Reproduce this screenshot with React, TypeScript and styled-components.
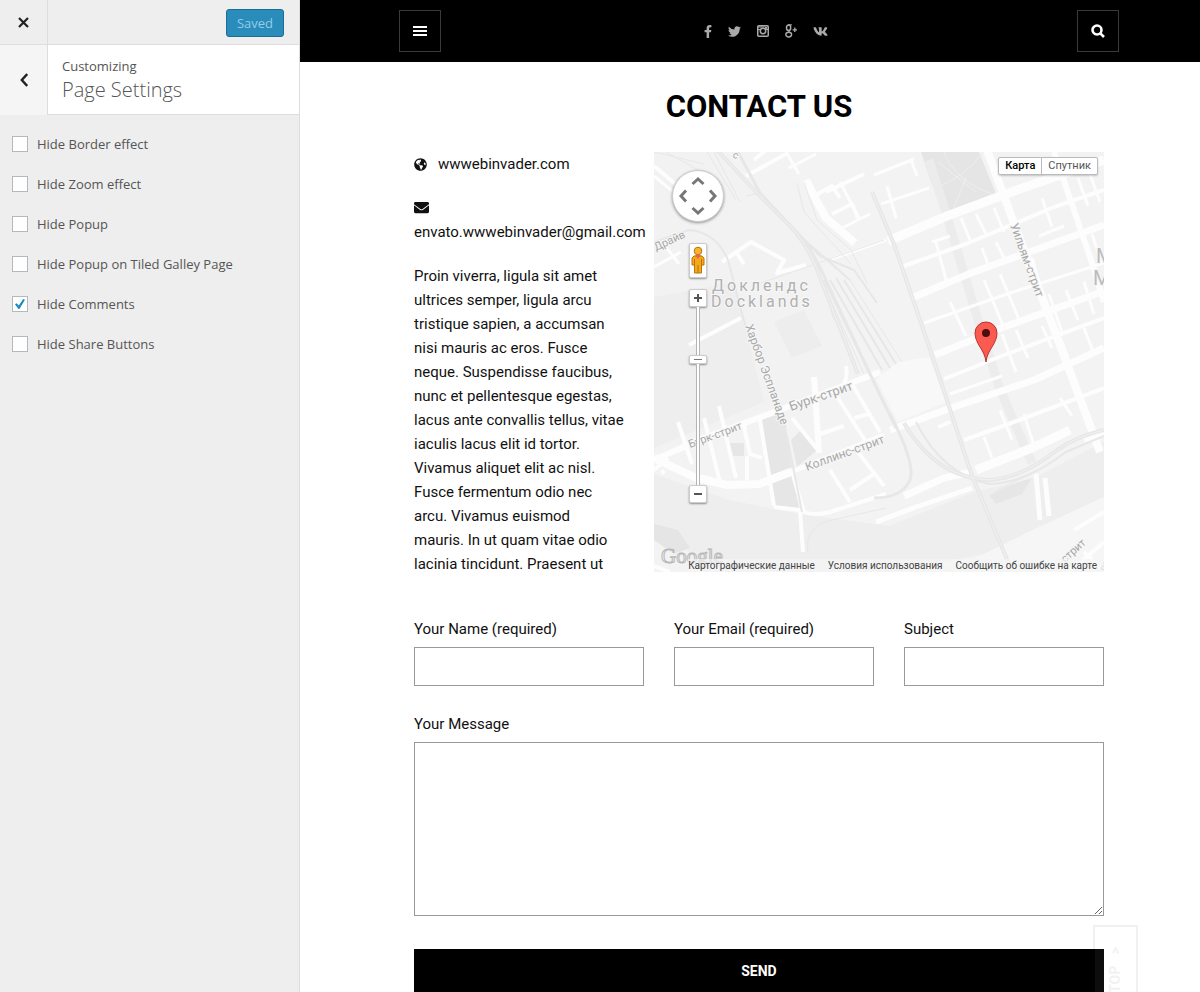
import React from 'react';
import styled, { createGlobalStyle } from 'styled-components';
import { FaFacebookF, FaTwitter, FaVk, FaGlobeAmericas, FaEnvelope } from 'react-icons/fa';

const GlobalStyle = createGlobalStyle`
  *, *::before, *::after { box-sizing: border-box; }
  body { margin: 0; background: #fff; }
  button, input, textarea { font: inherit; margin: 0; }
`;

const Shell = styled.div`
  display: grid;
  grid-template-columns: 300px minmax(0, 1fr);
  height: 100vh;
  overflow: hidden;
`;

/* ---------- customizer sidebar ---------- */

const Sidebar = styled.aside`
  background: #eee;
  border-right: 1px solid #ddd;
  color: #555;
  font: 13px/20px 'Open Sans', sans-serif;
`;

const SidebarBar = styled.div<{ $height: number; $light?: boolean }>`
  display: grid;
  grid-template-columns: 48px 1fr;
  height: ${(p) => p.$height}px;
  border-bottom: 1px solid #ddd;
  background: ${(p) => (p.$light ? '#fff' : '#eee')};
`;

const SquareButton = styled.button<{ $light?: boolean }>`
  display: grid;
  place-items: center;
  padding: 0;
  border: 0;
  border-right: 1px solid #ddd;
  background: ${(p) => (p.$light ? '#f5f5f5' : '#eee')};
  color: #222;
`;

const SaveArea = styled.div`
  display: flex;
  align-items: flex-start;
  justify-content: flex-end;
  padding: 9px 15px 0 0;
`;

const SaveButton = styled.button`
  height: 28px;
  padding: 0 10px;
  border: 1px solid #1b6d94;
  border-radius: 3px;
  background: #298cba;
  color: #94cde7;
  line-height: 26px;
`;

const PanelTitle = styled.div`
  padding: 11px 14px;
`;

const PanelName = styled.h2`
  margin: 0;
  font-size: 20px;
  font-weight: 300;
  line-height: 28px;
`;

const OptionList = styled.ul`
  display: grid;
  gap: 20px;
  margin: 0;
  padding: 19px 12px;
  list-style: none;
`;

const OptionLabel = styled.label`
  display: flex;
  align-items: center;
  gap: 9px;
`;

const Checkbox = styled.input`
  appearance: none;
  display: grid;
  place-items: center;
  width: 16px;
  height: 16px;
  border: 1px solid #b4b9be;
  background: #fff;
  &:checked::before {
    content: '';
    width: 10px;
    height: 10px;
    background: #1e8cbe;
    clip-path: polygon(0 52%, 16% 42%, 38% 66%, 82% 0, 100% 8%, 44% 100%, 34% 100%);
  }
`;

/* ---------- site preview ---------- */

const Preview = styled.main`
  position: relative;
  overflow: hidden;
  background: #fff;
  color: #111;
  font: 15px/24px Roboto, sans-serif;
`;

const TopBar = styled.header`
  padding-left: 18px;
  background: #000;
`;

const TopBarInner = styled.div`
  display: flex;
  align-items: center;
  justify-content: space-between;
  max-width: 720px;
  height: 62px;
  margin: 0 auto;
`;

const BoxButton = styled.button`
  display: grid;
  place-items: center;
  width: 42px;
  height: 42px;
  padding: 0;
  border: 1px solid #3a3a3a;
  background: #000;
  color: #fff;
`;

const Social = styled.nav`
  display: flex;
  align-items: center;
  gap: 16px;
  padding-left: 13px;
`;

const SocialLink = styled.a`
  display: flex;
  color: #aaa;
`;

const FacebookIcon = styled(FaFacebookF)`
  width: 8px;
  height: 13px;
`;

const Content = styled.div`
  padding: 0 15px 0 33px;
`;

const Column = styled.div`
  max-width: 690px;
  margin: 0 auto;
`;

const Title = styled.h1`
  margin: 0;
  padding: 27px 0;
  color: #000;
  font-size: 31px;
  font-weight: 700;
  line-height: 36px;
  text-align: center;
`;

const Intro = styled.section`
  display: grid;
  grid-template-columns: 1fr 450px;
  gap: 30px;
`;

const Info = styled.div`
  min-width: 0;
  white-space: nowrap;
`;

const InfoLine = styled.p`
  margin: 0 0 20px;
`;

const WideIcon = styled.span`
  display: inline-grid;
  width: 24px;
  vertical-align: -2px;
`;

const Story = styled.p`
  margin: 0;
  white-space: normal;
`;

const Form = styled.form`
  display: grid;
  padding-top: 41px;
`;

const FieldRow = styled.div`
  display: grid;
  grid-template-columns: 23fr 20fr 20fr;
  gap: 30px;
  padding-bottom: 26px;
`;

const Field = styled.label`
  display: grid;
  gap: 6px;
`;

const TextInput = styled.input`
  width: 100%;
  height: 39px;
  padding: 0 10px;
  border: 1px solid #999;
  border-radius: 0;
  background: #fff;
`;

const MessageInput = styled.textarea`
  display: block;
  width: 100%;
  height: 174px;
  padding: 10px;
  border: 1px solid #999;
  border-radius: 0;
  background: #fff;
`;

const SendButton = styled.button`
  height: 43px;
  margin-top: 33px;
  border: 0;
  background: #000;
  color: #fff;
  font-size: 14px;
  font-weight: 700;
`;

const TopLink = styled.a`
  position: absolute;
  right: 62px;
  bottom: -33px;
  display: flex;
  gap: 12px;
  align-items: center;
  justify-content: flex-end;
  width: 45px;
  height: 100px;
  padding: 20px 0;
  border: 2px solid #000;
  background: #fff;
  color: #000;
  font-size: 14px;
  font-weight: 700;
  line-height: 43px;
  text-decoration: none;
  writing-mode: vertical-rl;
  transform: rotate(180deg);
  opacity: 0.05;
`;

/* ---------- map ---------- */

const MapBox = styled.div`
  position: relative;
  height: 420px;
  overflow: hidden;
  background: #f1f1f1;
`;

const MapDrawing = styled.svg`
  display: block;
  width: 100%;
  height: 100%;
  font-family: Roboto, sans-serif;
`;

const Controls = styled.div`
  position: absolute;
  top: 18px;
  left: 18px;
  display: flex;
  flex-direction: column;
  align-items: center;
`;

const PanPad = styled.button`
  width: 52px;
  height: 52px;
  margin-bottom: 21px;
  padding: 0;
  border: 1px solid #ccc;
  border-radius: 50%;
  background: #fff;
  box-shadow: 0 1px 3px rgba(0, 0, 0, 0.4);
`;

const ControlButton = styled.button<{ $height?: number }>`
  display: grid;
  place-items: center;
  width: 18px;
  height: ${(p) => p.$height ?? 18}px;
  padding: 0;
  border: 1px solid #ccc;
  border-radius: 2px;
  background: #fff;
  box-shadow: 0 1px 2px rgba(0, 0, 0, 0.4);
`;

const PegButton = styled(ControlButton)`
  margin-bottom: 11px;
`;

const Track = styled.div<{ $height: number }>`
  width: 4px;
  height: ${(p) => p.$height}px;
  border: solid #b4b4b4;
  border-width: 0 1px;
  background: #fff;
`;

const TypeSwitch = styled.div`
  position: absolute;
  top: 5px;
  right: 6px;
  display: flex;
  border: 1px solid #bbb;
  border-radius: 2px;
  background: #fff;
  box-shadow: 0 1px 2px rgba(0, 0, 0, 0.2);
`;

const TypeButton = styled.button<{ $active?: boolean }>`
  height: 16px;
  padding: 0 6px;
  border: 0;
  background: none;
  color: ${(p) => (p.$active ? '#000' : '#565656')};
  font-size: 11px;
  font-weight: ${(p) => (p.$active ? 500 : 400)};
  line-height: 16px;
  & + & { border-left: 1px solid #bbb; }
`;

const MapFooter = styled.div`
  position: absolute;
  right: 0;
  bottom: 0;
  display: flex;
  gap: 13px;
  padding: 0 7px 0 0;
  background: rgba(245, 245, 245, 0.7);
  font-size: 10px;
  line-height: 13px;
`;

const FooterLink = styled.a`
  color: #444;
  text-decoration: none;
`;

type Line = [number, string];

const WHITE_ROADS: Line[] = [
  [4, 'M0 14 L26 36'], [3, 'M0 24 L22 42'], [3, 'M0 115 L27 100 M8 90 L25 112'],
  [4, 'M68 110 L97 90 L130 108 L123 121 L152 113 M82 100 L90 112'],
  [4, 'M35 193 L87 166'], [8, 'M152 28 L160 44 L172 66 L201 91'],
  [4, 'M160 44 L178 34 L186 46 M178 62 L198 52 L204 66 M172 40 L210 22'],
  [3, 'M186 30 L205 66 M188 76 L216 62 M132 0 L145 22 M135 16 L162 2'],
  [4, 'M100 8 L112 -2 M92 24 L132 2'], [3, 'M175 108 L232 88'],
  [3, 'M220 23 L260 7 M227 52 L275 36 M233 34 L242 66 M257 8 L263 24'],
  [9, 'M234 89 L293 64 L360 39 L450 8'], [7, 'M260 145 L317 121 L450 73'],
  [4, 'M247 115 L312 92 L400 55 L450 38'], [3, 'M270 171 L350 143 L450 111'],
  [7, 'M281 203 L350 175 L450 139'], [8, 'M333 -2 L360 71 L403 185 L446 300'],
  [6, 'M400 0 L437 108 L450 150'], [3, 'M307 66 L316 88 M322 62 L332 82 M340 56 L350 80'],
  [3, 'M328 96 L336 118 M342 90 L350 106 M282 90 L292 128 M278 90 L296 84'],
  [3, 'M296 150 L312 184 M330 128 L350 176 M346 122 L366 170 M378 106 L388 140'],
  [3, 'M388 46 L398 75 M424 26 L434 54 M436 22 L446 50 M385 84 L410 74'],
  [3, 'M395 142 L408 180 M412 138 L424 168 M430 130 L440 162 M438 82 L448 112'],
  [3, 'M348 182 L362 220 M362 178 L374 206 M388 174 L398 196 M404 180 L414 206 M430 176 L440 202'],
  [4, 'M290 227 L345 205 L450 166'], [3, 'M296 242 L348 224'],
  [7, 'M236 278 L300 255 L380 228 L450 196'], [4, 'M310 288 L360 270 L450 236'],
  [3, 'M346 258 L358 288 M370 262 L380 294 M406 246 L418 264 M330 285 L338 306'],
  [9, 'M322 318 L378 296 L416 278'], [4, 'M284 275 L296 270 M340 310 L362 302'],
  [5, 'M382 322 L386 368 M391 326 L395 364'], [7, 'M250 344 L290 326 L318 320'],
  [5, 'M222 370 L262 355 L318 336'], [6, 'M430 288 L450 281'],
  [6, 'M0 308 L50 286 L107 265 L197 231 L226 220'],
  [8, 'M0 306 L40 325 L73 333 L105 332 L137 320'], [5, 'M137 320 L230 283'],
  [4, 'M24 270 L38 312 M50 266 L66 330 M65 254 L82 326 M106 268 L120 354'],
  [4, 'M120 355 L146 358 L149 400 M89 270 L96 302 L108 306 M93 304 L93 328'],
  [6, 'M160 225 L165 301'], [4, 'M138 266 L163 297 M180 240 L216 296 M198 232 L226 280'],
  [4, 'M166 282 L190 274 M200 266 L215 262 M176 318 L196 350 M196 338 L220 322 M204 300 L230 334'],
  [4, 'M138 320 L150 360 Q160 364 176 360 L232 342 M192 214 Q194 224 190 232'],
  [4, 'M0 318 L14 306 M8 318 L10 322'],
  [4, 'M0 414 L16 420 M420 378 L450 360 M415 420 L450 390 M430 400 L450 420'],
];

const RAIL: Line[] = [
  [4, 'M63 -2 L103 41 L140 78 Q158 100 167 128 L204 222'],
  [3, 'M83 -2 L106 41 L150 88 Q162 106 172 128 L216 222 L242 276'],
  [1, 'M52 -2 L82 48 M60 0 L86 50 M92 44 L106 41'],
  [2, 'M103 41 L166 104 L200 118 L223 151'],
  [1, 'M143 31 L150 60 L197 112 M150 30 L163 68 L197 98 L213 131'],
  [2, 'M146 84 L196 128 M170 128 L216 222'],
  [2, 'M176 128 L228 218 M182 126 L236 216 M190 128 L242 212'],
  [1, 'M164 116 L180 168 M196 128 L248 210 M155 100 L210 222 M204 124 L212 134'],
  [4, 'M218 40 L240 92 L283 218 L318 324 L355 412'],
  [2, 'M0 90 L35 78 Q62 80 74 108 L85 150 L92 176 M133 284 L148 360'],
  [3, 'M236 262 Q262 312 256 328 Q248 346 220 346'],
  [4, 'M250 271 Q282 326 335 328 Q368 326 403 298 Q424 284 450 278'],
  [2, 'M262 270 Q288 322 335 332 Q370 332 412 300 L450 284'],
  [1, 'M336 344 Q344 336 378 322 M154 400 Q150 374 178 368 L232 356'],
  [1, 'M107 131 L230 88 M0 0 L50 12 M12 0 L55 24'],
];

const LABELS: { x: number; y: number; turn: number; size: number; text: string }[] = [
  { x: 2, y: 99, turn: -25, size: 11, text: 'Драйв' },
  { x: 91, y: 174, turn: 70, size: 12, text: 'Харбор Эспланаде' },
  { x: 137, y: 259, turn: -19, size: 13, text: 'Бурк-стрит' },
  { x: 36, y: 296, turn: -20, size: 11, text: 'Бурк-стрит' },
  { x: 153, y: 319, turn: -20, size: 12, text: 'Коллинс-стрит' },
  { x: 356, y: 73, turn: 70, size: 12, text: 'Уильям-стрит' },
  { x: 411, y: 411, turn: -42, size: 11, text: 'стрит' },
  { x: 452, y: 420, turn: -70, size: 11, text: 'рит' },
];

function StreetMap() {
  return (
    <MapDrawing viewBox="0 0 450 420" preserveAspectRatio="xMidYMid slice" aria-hidden="true">
      <rect width="450" height="420" fill="#f3f3f3" />
      <path d="M0 0 H70 L105 42 L150 90 L175 150 L205 225 L100 262 L0 300Z" fill="#f2f2f2" />
      <path d="M0 145 L80 130 L110 250 L0 296Z" fill="#eee" />
      <path d="M222 227 L244 210 L275 205 L292 250 L244 270Z" fill="#f8f8f8" />
      <path d="M120 170 L150 158 L168 194 L138 206Z" fill="#ededed" />
      <path d="M0 322 L75 348 L145 362 L235 374 L320 340 L380 326 L450 290 V345 L385 375 L330 402 L240 420 H50 L30 394 L0 376Z" fill="#eee" />
      <path d="M0 372 L24 378 L36 396 L20 402 L0 388Z" fill="#e5e5e5" />
      <path d="M330 402 L385 375 L450 345 V420 H290Z" fill="#f6f6f6" />
      <path d="M267 0 H325 L342 42 L295 60 L277 30Z" fill="#e5e5e5" />
      <g fill="none" stroke="#efefef" strokeWidth="1">
        <path d="M282 36 Q310 25 328 2 M290 0 Q300 28 338 42 M284 10 L322 40 M300 56 L312 26" />
      </g>
      <path d="M107 268 L130 260 L138 315 L117 323Z M137 288 L147 278 L163 298 L143 315Z M118 328 L138 323 L145 356 L120 356Z M75 291 H90 V304 H77Z" fill="#e6e6e6" />
      <path d="M275 8 L292 61 L317 145 L345 235 L378 311" fill="none" stroke="#ececec" strokeWidth="9" />
      <path d="M336 344 Q350 334 378 326 L368 342 L342 352Z" fill="#e6e6e6" />
      <g fill="none" stroke="#fdfdfd" strokeLinejoin="round">
        {WHITE_ROADS.map(([w, d]) => (
          <path key={d} d={d} strokeWidth={w} />
        ))}
      </g>
      <g fill="none" stroke="#e7e7e7" strokeLinejoin="round">
        {RAIL.map(([w, d]) => (
          <path key={d} d={d} strokeWidth={w} />
        ))}
      </g>
      <g fill="none" stroke="#f2f2f2" strokeWidth="1">
        <path d="M63 -2 L103 41 L140 78 Q158 100 167 128 L204 222 M218 40 L240 92 L283 218 L318 324 L355 412 M250 271 Q282 326 335 328 Q368 326 403 298 Q424 284 450 278" />
      </g>
      <g fill="#a8a8a8" stroke="#f7f7f7" strokeWidth="2" paintOrder="stroke">
        {LABELS.map((l) => (
          <text key={l.text + l.x} fontSize={l.size} transform={`translate(${l.x} ${l.y}) rotate(${l.turn})`}>
            {l.text}
          </text>
        ))}
        <g fontSize="16" fill="#b0b0b0" letterSpacing="3">
          <text x="58" y="139">Доклендс</text>
          <text x="57" y="155">Docklands</text>
        </g>
        <g fontSize="20" fill="#bcbcbc">
          <text x="442" y="111">М</text>
          <text x="439" y="133">М</text>
        </g>
        <text x="78" y="5" fontSize="10" transform="rotate(25 78 5)">с</text>
      </g>
      <text x="7" y="411" fontFamily="'Liberation Serif', serif" fontSize="21" fill="#eee" stroke="#b8b8b8" strokeWidth="1">Google</text>
      <path d="M332 210 C331 198 321 192 321 181 A11 11 0 0 1 343 181 C343 192 333 198 332 210Z" fill="#fb5a50" stroke="#b5362c" strokeWidth="1" />
      <circle cx="332" cy="181" r="4" fill="#4b100d" />
    </MapDrawing>
  );
}

function LocationMap() {
  return (
    <MapBox>
      <StreetMap />
      <Controls>
        <PanPad type="button" aria-label="Pan">
          <svg width="50" height="50" viewBox="0 0 50 50" fill="none" stroke="#777" strokeWidth="3">
            <path d="M19.500 13 L25 8 L30.500 13 M19.500 37 L25 42 L30.500 37 M13 19.500 L8 25 L13 30.500 M37 19.500 L42 25 L37 30.500" />
          </svg>
        </PanPad>
        <PegButton type="button" $height={35} aria-label="Street view">
          <svg width="14" height="29" viewBox="0 0 14 29">
            <path d="M3 10 H11 L13 12 V19 H10.500 V27 H3.500 V19 H1 V12Z" fill="#f5a81c" stroke="#b87508" />
            <circle cx="7" cy="5" r="3.800" fill="#f9b52c" stroke="#b87508" />
            <path d="M4 9 H10 L7 13Z" fill="#ee5f5b" />
            <path d="M7 19 V27 M3.500 13 V19 M10.500 13 V19" stroke="#b87508" />
          </svg>
        </PegButton>
        <ControlButton type="button" aria-label="Zoom in">
          <svg width="8" height="8" viewBox="0 0 8 8" stroke="#555" strokeWidth="2"><path d="M4 0 V8 M0 4 H8" /></svg>
        </ControlButton>
        <Track $height={48} />
        <ControlButton type="button" $height={9} aria-label="Zoom level">
          <svg width="8" height="1" viewBox="0 0 8 1"><path d="M0 0 H8 V1 H0Z" fill="#777" /></svg>
        </ControlButton>
        <Track $height={121} />
        <ControlButton type="button" aria-label="Zoom out">
          <svg width="8" height="2" viewBox="0 0 8 2"><path d="M0 0 H8 V2 H0Z" fill="#555" /></svg>
        </ControlButton>
      </Controls>
      <TypeSwitch>
        <TypeButton type="button" $active>Карта</TypeButton>
        <TypeButton type="button">Спутник</TypeButton>
      </TypeSwitch>
      <MapFooter>
        <FooterLink href="#data">Картографические данные</FooterLink>
        <FooterLink href="#terms">Условия использования</FooterLink>
        <FooterLink href="#report">Сообщить об ошибке на карте</FooterLink>
      </MapFooter>
    </MapBox>
  );
}

function InstagramIcon() {
  return (
    <svg width="12" height="12" viewBox="0 0 12 12" fill="none" stroke="currentColor">
      <rect x="0.750" y="0.750" width="10.500" height="10.500" rx="1" strokeWidth="1.500" />
      <circle cx="6" cy="6" r="2.700" strokeWidth="1.500" />
      <path d="M1 2 H7.500 M1 4.500 H3.500 M8.500 4.500 H11" strokeWidth="1.200" />
      <rect x="8" y="1.800" width="2.200" height="2" fill="currentColor" stroke="none" />
    </svg>
  );
}

function GooglePlusIcon() {
  return (
    <svg width="12" height="14" viewBox="0 0 12 14" fill="none" stroke="currentColor">
      <ellipse cx="3.600" cy="3.800" rx="2.100" ry="2.800" strokeWidth="1.500" />
      <path d="M3.200 0.900 H6.800 M4.600 6.200 Q3 7 4.600 8" strokeWidth="1.300" />
      <ellipse cx="3.700" cy="10.600" rx="2.900" ry="2.400" strokeWidth="1.400" />
      <path d="M9.800 3.600 V8 M7.600 5.800 H12" strokeWidth="1.300" />
    </svg>
  );
}

const OPTIONS = [
  'Hide Border effect',
  'Hide Zoom effect',
  'Hide Popup',
  'Hide Popup on Tiled Galley Page',
  'Hide Comments',
  'Hide Share Buttons',
];

export default function App() {
  return (
    <>
      <GlobalStyle />
      <Shell>
        <Sidebar>
          <SidebarBar $height={45}>
            <SquareButton type="button" aria-label="Close">
              <svg width="11" height="11" viewBox="0 0 11 11" stroke="currentColor" strokeWidth="2.200">
                <path d="M1 1 L10 10 M10 1 L1 10" />
              </svg>
            </SquareButton>
            <SaveArea>
              <SaveButton type="button">Saved</SaveButton>
            </SaveArea>
          </SidebarBar>
          <SidebarBar $height={70} $light>
            <SquareButton type="button" $light aria-label="Back">
              <svg width="8" height="14" viewBox="0 0 8 14" fill="none" stroke="currentColor" strokeWidth="2.400">
                <path d="M7.200 1 L1.800 7 L7.200 13" />
              </svg>
            </SquareButton>
            <PanelTitle>
              Customizing
              <PanelName>Page Settings</PanelName>
            </PanelTitle>
          </SidebarBar>
          <OptionList>
            {OPTIONS.map((name) => (
              <li key={name}>
                <OptionLabel>
                  <Checkbox type="checkbox" defaultChecked={name === 'Hide Comments'} />
                  {name}
                </OptionLabel>
              </li>
            ))}
          </OptionList>
        </Sidebar>

        <Preview>
          <TopBar>
            <TopBarInner>
              <BoxButton type="button" aria-label="Menu">
                <svg width="14" height="10" viewBox="0 0 14 10" fill="currentColor">
                  <path d="M0 0 H14 V2 H0Z M0 4 H14 V6 H0Z M0 8 H14 V10 H0Z" />
                </svg>
              </BoxButton>
              <Social>
                <SocialLink href="#facebook" aria-label="Facebook"><FacebookIcon /></SocialLink>
                <SocialLink href="#twitter" aria-label="Twitter"><FaTwitter size={13} /></SocialLink>
                <SocialLink href="#instagram" aria-label="Instagram"><InstagramIcon /></SocialLink>
                <SocialLink href="#google" aria-label="Google Plus"><GooglePlusIcon /></SocialLink>
                <SocialLink href="#vk" aria-label="VK"><FaVk size={15} /></SocialLink>
              </Social>
              <BoxButton type="button" aria-label="Search">
                <svg width="14" height="14" viewBox="0 0 14 14" fill="none" stroke="currentColor" strokeWidth="2.600">
                  <circle cx="6" cy="6" r="4.500" />
                  <path d="M9.300 9.300 L13 13" />
                </svg>
              </BoxButton>
            </TopBarInner>
          </TopBar>

          <Content>
            <Column>
              <Title>CONTACT US</Title>
              <Intro>
                <Info>
                  <InfoLine>
                    <WideIcon><FaGlobeAmericas size={13} /></WideIcon>
                    wwwebinvader.com
                  </InfoLine>
                  <InfoLine>
                    <WideIcon><FaEnvelope size={15} /></WideIcon>
                    <br />
                    envato.wwwebinvader@gmail.com
                  </InfoLine>
                  <Story>
                    Proin viverra, ligula sit amet ultrices semper, ligula arcu tristique sapien, a accumsan nisi
                    mauris ac eros. Fusce neque. Suspendisse faucibus, nunc et pellentesque egestas, lacus ante
                    convallis tellus, vitae iaculis lacus elit id tortor. Vivamus aliquet elit ac nisl. Fusce
                    fermentum odio nec arcu. Vivamus euismod
                    <br />
                    mauris. In ut quam vitae odio lacinia tincidunt. Praesent ut
                  </Story>
                </Info>
                <LocationMap />
              </Intro>
              <Form>
                <FieldRow>
                  <Field>Your Name (required)<TextInput type="text" /></Field>
                  <Field>Your Email (required)<TextInput type="email" /></Field>
                  <Field>Subject<TextInput type="text" /></Field>
                </FieldRow>
                <Field>Your Message<MessageInput /></Field>
                <SendButton type="submit">SEND</SendButton>
              </Form>
            </Column>
          </Content>
          <TopLink href="#top"><span>TOP</span><span>&gt;</span></TopLink>
        </Preview>
      </Shell>
    </>
  );
}
